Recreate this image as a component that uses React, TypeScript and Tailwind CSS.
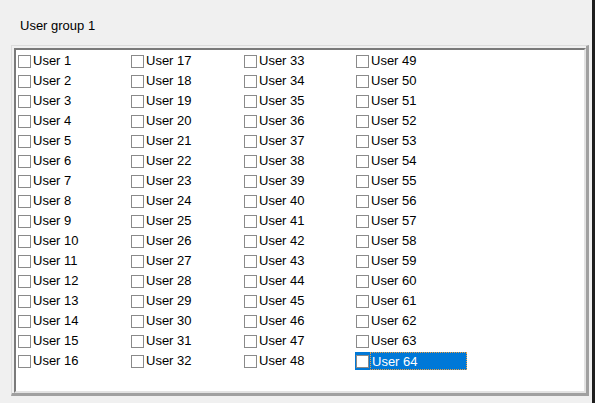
import React from "react";

const font = { fontFamily: '"Liberation Sans", Arial, sans-serif' };

function Item({ n, selected }: { n: number; selected?: boolean }) {
  return (
    <div
      className={
        "flex items-center h-[18px] w-[112px] " +
        (selected ? "bg-[#0078d7] text-white" : "text-black")
      }
    >
      <div className="ml-[1px] w-[13px] h-[13px] shrink-0 border border-[#8a8a8a] bg-white" />
      <span
        className={
          "ml-[1px] pl-[1px] h-[18px] leading-[18px] text-[13px] whitespace-nowrap " +
          (selected ? "flex-1 border border-dotted border-[#f0a040] leading-[16px]" : "")
        }
      >
        User {n}
      </span>
    </div>
  );
}

export default function App() {
  const items = Array.from({ length: 64 }, (_, i) => i + 1);
  return (
    <div className="flex w-[595px] h-[403px] bg-[#f0f0f0] overflow-hidden" style={font}>
      <div className="flex flex-col w-[592px]">
        <div className="pt-[18px] pl-[20px] leading-[15px] text-[13px] text-black">User group 1</div>
        <div className="mt-[12px] ml-[11px] w-[578px] h-[351px] border-t border-l border-t-[#dcdcdc] border-l-[#dcdcdc] border-r-[3px] border-b-[3px] border-r-[#a0a0a0] border-b-[#a0a0a0] pt-[2px] pl-[2px]">
          <div className="w-full h-full bg-white border-t-2 border-l-2 border-t-[#7a7a7a] border-l-[#7a7a7a] border-r-2 border-b-2 border-r-[#e3e3e3] border-b-[#e3e3e3] pt-[2px] pl-[1px]">
            <div className="grid grid-flow-col grid-cols-[113px_113px_112px_112px] grid-rows-[repeat(16,18px)] gap-y-[2px]">
              {items.map((n) => (
                <Item key={n} n={n} selected={n === 64} />
              ))}
            </div>
          </div>
        </div>
      </div>
      <div className="w-[3px] h-full bg-[#1e1e1e]" />
    </div>
  );
}
